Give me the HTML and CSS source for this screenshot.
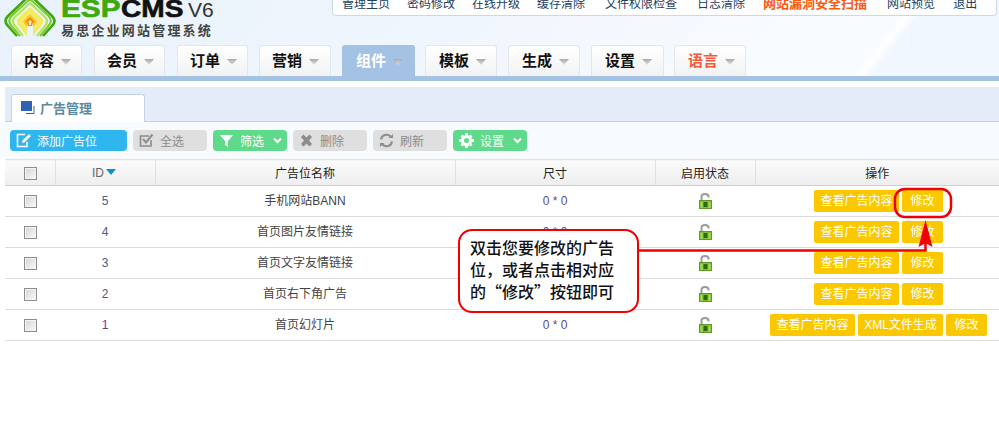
FILE: index.html
```html
<!DOCTYPE html>
<html lang="zh">
<head>
<meta charset="utf-8">
<title>广告管理</title>
<link rel="stylesheet" href="styles.css">
</head>
<body>
<header class="head">
  <div class="head-top">
    <div class="logo">
      <svg class="logo-mark" width="61" height="38" viewBox="0 0 61 38">
        <g fill="none" stroke-linejoin="round">
          <path d="M17 36L8 26Q3 21 8 16L30 -5L52 16Q57 21 52 26L43 36" stroke="#3fa80f" stroke-width="2.6"/>
          <path d="M20 36L11.500 26Q7 21 11.500 16L30 -1L48.500 16Q53 21 48.500 26L40 36" stroke="#7ccc2c" stroke-width="2"/>
          <path d="M23 36L15 26Q11 21 15 17L30 3L45 17Q49 21 45 26L37 36" stroke="#b8e558" stroke-width="2.200"/>
        </g>
        <path d="M27 36L18 25Q15 21 18 18L30 7L42 18Q45 21 42 25L33 36L33 29L37 23Q38 21 36 20L30 14L24 20Q22 21 23 23L27 29Z" fill="#f4ec60"/>
        <path d="M27 28L23.500 23Q22.500 21 24 20L30 14L36 20Q37.500 21 36.500 23L33 28L33 25H27Z" fill="#ffc71c"/>
        <path d="M30 17L34.500 21.500L32 24V26H28V24L25.500 21.500Z" fill="#ee8a1a"/>
        <path d="M30 20L32 22L31 23V25H29V23L28 22Z" fill="#fff2b0"/>
      </svg>
      <div class="logo-text">
        <div class="logo-name"><span class="logo-esp">ESP</span><span class="logo-cms">CMS</span><span class="logo-v">V6</span></div>
        <div class="logo-sub">易思企业网站管理系统</div>
      </div>
    </div>
    <nav class="links">
      <a>管理主页</a><a>密码修改</a><a>在线升级</a><a>缓存清除</a><a>文件权限检查</a><a>日志清除</a><a class="hot">网站漏洞安全扫描</a><a>网站预览</a><a>退出</a>
    </nav>
  </div>
  <nav class="tabs">
    <a class="tab">内容<i class="caret"></i></a>
    <a class="tab">会员<i class="caret"></i></a>
    <a class="tab">订单<i class="caret"></i></a>
    <a class="tab">营销<i class="caret"></i></a>
    <a class="tab active">组件<i class="caret"></i></a>
    <a class="tab">模板<i class="caret"></i></a>
    <a class="tab">生成<i class="caret"></i></a>
    <a class="tab">设置<i class="caret"></i></a>
    <a class="tab lang">语言<i class="caret"></i></a>
  </nav>
</header>

<main class="content">
  <div class="subbar">
    <div class="subtab">
      <svg width="15" height="14" viewBox="0 0 15 14"><rect x="0" y="0" width="11" height="10" fill="#2e63b4"/><path d="M13 5V12.500H5" fill="none" stroke="#2e63b4" stroke-width="1"/></svg>
      <span>广告管理</span>
    </div>
  </div>

  <div class="toolbar">
    <a class="btn blue wide">
      <svg width="15" height="15" viewBox="0 0 15 15"><path d="M9 1.500H1.500V13.500H11V9" fill="none" stroke="#fff" stroke-width="1.600"/><path d="M13 1L15 3L8.500 9.500L6 10L6.500 7.500Z" fill="#fff"/></svg>
      <span>添加广告位</span>
    </a>
    <a class="btn grey">
      <svg width="15" height="15" viewBox="0 0 15 15"><path d="M12 7V13H1.500V3H10" fill="none" stroke="#8c8c8c" stroke-width="1.600"/><path d="M4 6L7 9.500L13.500 1.500" fill="none" stroke="#8c8c8c" stroke-width="2"/></svg>
      <span>全选</span>
    </a>
    <a class="btn green">
      <svg width="15" height="15" viewBox="0 0 15 15"><path d="M1 2H14L9 8V14L6 12V8Z" fill="#fff"/></svg>
      <span>筛选</span>
      <svg class="chev" width="9" height="7" viewBox="0 0 9 7"><path d="M1 1.500L4.500 5L8 1.500" fill="none" stroke="#fff" stroke-width="2"/></svg>
    </a>
    <a class="btn grey">
      <svg width="15" height="15" viewBox="0 0 15 15"><path d="M2 4L4.500 1.500L7.500 4.500L10.500 1.500L13 4L10 7.500L13 11L10.500 13.500L7.500 10.500L4.500 13.500L2 11L5 7.500Z" fill="#8c8c8c"/></svg>
      <span>删除</span>
    </a>
    <a class="btn grey">
      <svg width="15" height="15" viewBox="0 0 15 15"><path d="M2 6.500A5.500 5.500 0 0 1 11.500 3.500M13 8.500A5.500 5.500 0 0 1 3.500 11.500" fill="none" stroke="#8c8c8c" stroke-width="2"/><path d="M9.500 5H14V1ZM5.500 10H1V14Z" fill="#8c8c8c"/></svg>
      <span>刷新</span>
    </a>
    <a class="btn green">
      <svg width="15" height="15" viewBox="0 0 15 15"><circle cx="7.500" cy="7.500" r="4" fill="none" stroke="#fff" stroke-width="3"/><path d="M6 0H9V3H6ZM6 12H9V15H6ZM0 6H3V9H0ZM12 6H15V9H12ZM1.500 3.500L3.500 1.500L5.500 3.500L3.500 5.500ZM9.500 11.500L11.500 9.500L13.500 11.500L11.500 13.500ZM9.500 3.500L11.500 1.500L13.500 3.500L11.500 5.500ZM1.500 11.500L3.500 9.500L5.500 11.500L3.500 13.500Z" fill="#fff"/></svg>
      <span>设置</span>
      <svg class="chev" width="9" height="7" viewBox="0 0 9 7"><path d="M1 1.500L4.500 5L8 1.500" fill="none" stroke="#fff" stroke-width="2"/></svg>
    </a>
  </div>

  <table class="grid">
    <colgroup>
      <col class="c-check"><col class="c-id"><col class="c-name"><col class="c-size"><col class="c-state"><col class="c-op">
    </colgroup>
    <thead>
      <tr>
        <th class="cell-check"><i class="check"></i></th>
        <th class="th-id">ID<i class="sort"></i></th>
        <th>广告位名称</th>
        <th>尺寸</th>
        <th>启用状态</th>
        <th class="th-last">操作</th>
      </tr>
    </thead>
    <tbody>
      <tr>
        <td class="cell-check"><i class="check"></i></td><td class="id">5</td><td>手机网站BANN</td><td class="size">0 * 0</td>
        <td><svg class="lock" width="13" height="16" viewBox="0 0 13 16"><use href="#lock"/></svg></td>
        <td class="ops"><a class="op">查看广告内容</a><a class="op">修改</a></td>
      </tr>
      <tr>
        <td class="cell-check"><i class="check"></i></td><td class="id">4</td><td>首页图片友情链接</td><td class="size">0 * 0</td>
        <td><svg class="lock" width="13" height="16" viewBox="0 0 13 16"><use href="#lock"/></svg></td>
        <td class="ops"><a class="op">查看广告内容</a><a class="op">修改</a></td>
      </tr>
      <tr>
        <td class="cell-check"><i class="check"></i></td><td class="id">3</td><td>首页文字友情链接</td><td class="size">0 * 0</td>
        <td><svg class="lock" width="13" height="16" viewBox="0 0 13 16"><use href="#lock"/></svg></td>
        <td class="ops"><a class="op">查看广告内容</a><a class="op">修改</a></td>
      </tr>
      <tr>
        <td class="cell-check"><i class="check"></i></td><td class="id">2</td><td>首页右下角广告</td><td class="size">0 * 0</td>
        <td><svg class="lock" width="13" height="16" viewBox="0 0 13 16"><use href="#lock"/></svg></td>
        <td class="ops"><a class="op">查看广告内容</a><a class="op">修改</a></td>
      </tr>
      <tr>
        <td class="cell-check"><i class="check"></i></td><td class="id id1">1</td><td>首页幻灯片</td><td class="size">0 * 0</td>
        <td><svg class="lock" width="13" height="16" viewBox="0 0 13 16"><use href="#lock"/></svg></td>
        <td class="ops"><a class="op">查看广告内容</a><a class="op op-xml">XML文件生成</a><a class="op">修改</a></td>
      </tr>
    </tbody>
  </table>
</main>

<svg class="defs" width="0" height="0">
  <symbol id="lock" viewBox="0 0 13 16">
    <path d="M2.500 8V3.500Q2.500 1 6 1Q9.500 1 9.500 3.500V4.500" fill="none" stroke="#9a9a9a" stroke-width="2"/>
    <rect x="0.500" y="7.500" width="12" height="8" fill="#7cc22e" stroke="#5f9a25"/>
    <rect x="4.500" y="9" width="4" height="5" fill="#2f6a10"/>
    <path d="M1.500 10H3.500M1.500 12H3.500M1.500 14H3.500M9.500 10H11.500M9.500 12H11.500M9.500 14H11.500" stroke="#c8ee8a"/>
  </symbol>
</svg>

<svg class="marks" width="999" height="437" viewBox="0 0 999 437">
  <rect x="895" y="189" width="56" height="28" rx="10" fill="none" stroke="#f00000" stroke-width="2.500"/>
  <path d="M638 250.500H925.500V240" fill="none" stroke="#f00000" stroke-width="2.500"/>
  <path d="M925.500 220L932.500 247L925.500 243L918.500 247Z" fill="#f00000"/>
</svg>
<div class="callout">双击您要修改的广告位，或者点击相对应的“修改”按钮即可</div>
</body>
</html>
```
FILE: styles.css
```css
* { box-sizing: border-box; }
html, body { margin: 0; padding: 0; }
body {
  width: 999px;
  height: 437px;
  overflow: hidden;
  position: relative;
  background: #fff;
  font-family: "Liberation Sans", "Noto Sans CJK SC", sans-serif;
  font-size: 12px;
  color: #333;
}
a { text-decoration: none; color: inherit; }
i { font-style: normal; }

.head {
  height: 81px;
  background-color: #edf4fd;
  background-image: linear-gradient(128deg, #e9f2fc 0, #f0f6fd 45%, #f6faff 68%, #f9fcff 86%, #fdfeff 87%, #f1f7fe 88%);
  background-size: 100% 76px;
  background-repeat: no-repeat;
  border-bottom: 5px solid #a3c2e4;
}
.head-top { display: flex; justify-content: space-between; height: 45px; }

.logo { display: flex; height: 38px; overflow: hidden; }
.logo-mark { flex: none; }
.logo-text { margin-top: -3px; }
.logo-name { display: flex; align-items: baseline; height: 24px; line-height: 24px; white-space: nowrap; }
.logo-esp, .logo-cms {
  display: inline-block;
  font-size: 24px;
  font-weight: 700;
  -webkit-text-stroke: .6px currentColor;
  transform-origin: left center;
}
.logo-esp { width: 60px; color: #3fa90c; transform: scaleX(1.24); }
.logo-cms { width: 63px; color: #111; transform: scaleX(1.17); }
.logo-v { color: #333; font-size: 21px; margin-left: 4px; }
.logo-sub {
  margin-top: 3px;
  font-size: 13px;
  line-height: 14px;
  font-weight: 700;
  letter-spacing: 2.200px;
  color: #444;
  white-space: nowrap;
}

.links {
  display: flex;
  gap: 17px;
  align-self: flex-start;
  width: 665px;
  height: 16px;
  margin-right: 2px;
  padding-left: 9px;
  background: #fff;
  border: 1px solid #c9d8ea;
  border-top: 0;
  border-radius: 0 0 4px 4px;
  overflow: hidden;
  line-height: 8px;
  color: #23405f;
  white-space: nowrap;
}
.links a { flex: none; }
.links a:nth-child(5), .links a:nth-child(6), .links a:nth-child(8) { margin-left: 3px; }
.links a:nth-child(7), .links a:nth-child(9) { margin-left: 1px; }
.links .hot { color: #fa5a14; font-weight: 700; font-size: 13px; }

.tabs { display: flex; gap: 12px; padding-left: 11px; height: 31px; }
.tab {
  width: 71px;
  height: 31px;
  display: flex;
  align-items: center;
  gap: 7px;
  padding: 0 0 3px 12px;
  background: linear-gradient(#fff, #f1f2f3);
  border: 1px solid #e3e6ea;
  border-bottom: 0;
  border-radius: 3px 3px 0 0;
  font-size: 15px;
  font-weight: 700;
  color: #111;
}
.tab:nth-child(4) { margin-left: -1px; width: 72px; }
.tab:nth-child(5) { margin-left: -1px; width: 73px; padding-left: 13px; }
.tab:nth-child(6) { margin-left: -2px; width: 72px; padding-left: 13px; }
.tab:nth-child(7) { margin-left: -1px; width: 72px; padding-left: 13px; }
.tab:nth-child(8) { margin-left: -1px; width: 73px; padding-left: 13px; }
.tab:nth-child(9) { margin-left: -2px; width: 72px; padding-left: 13px; }
.tab.active { background: #a3c2e4; border-color: #a3c2e4; color: #fff; }
.tab.lang { color: #f5593a; }
.caret {
  width: 10px;
  height: 6px;
  margin-top: 5px;
  background: linear-gradient(#a8a8a8, #e2e2e2);
  clip-path: polygon(0 0, 100% 0, 50% 100%);
}

.content { background: #fff; padding: 6px 0 0 5px; }
.subbar {
  height: 35px;
  padding: 7px 0 0 6px;
  background: #e3ecf8;
  border-bottom: 1px solid #c9cfd3;
}
.subtab {
  width: 134px;
  height: 28px;
  display: flex;
  align-items: center;
  gap: 4px;
  padding: 0 0 2px 9px;
  background: #fff;
  border: 1px solid #c6d2dc;
  border-bottom: 0;
  border-radius: 3px 3px 0 0;
  font-size: 13px;
  font-weight: 700;
  color: #5b8ba3;
}

.toolbar {
  display: flex;
  gap: 6px;
  height: 37px;
  padding-top: 8px;
  margin-left: -5px;
  padding-left: 10px;
  background: #f7fbfe;
}
.btn {
  height: 21px;
  display: flex;
  align-items: center;
  gap: 6px;
  padding-left: 6px;
  width: 74px;
  border-radius: 4px;
  font-size: 12px;
}
.btn.wide { width: 117px; }
.btn.blue { background: #30b6ee; color: #fff; }
.btn.grey { background: #dfdfdf; color: #8c8c8c; }
.btn.green { background: #5fd98a; color: #fff; }
.chev { margin-left: 3px; }

.grid {
  width: 994px;
  border-collapse: collapse;
  table-layout: fixed;
}
.c-check { width: 50px; }
.c-id { width: 100px; }
.c-name { width: 300px; }
.c-size { width: 200px; }
.c-state { width: 100px; }
.c-op { width: 244px; }
.grid th {
  height: 26px;
  padding: 0;
  font-weight: 400;
  color: #222;
  text-align: center;
  background: linear-gradient(#fbfbfb, #eeeeee);
  border-top: 1px solid #dfe3e6;
  border-bottom: 1px solid #cfcfcf;
  border-right: 1px solid #e0e0e0;
}
.grid th.th-last { border-right: 0; }
.grid th.th-id { color: #666; padding-right: 2px; }
.grid td {
  height: 31px;
  padding: 0 0 1px;
  line-height: 14px;
  text-align: center;
  border-bottom: 1px solid #dcdcdc;
  color: #444;
}
.grid td.id { color: #4a5a8c; }
.grid td.id1 { color: #6b3a8c; }
.grid td.size { color: #5a4a90; }
.grid .cell-check { padding-left: 1px; }
.check {
  display: inline-block;
  width: 13px;
  height: 13px;
  vertical-align: middle;
  border: 1px solid #8d8d8d;
  background: linear-gradient(135deg, #d4d4d4, #fafafa);
  box-shadow: inset 0 0 0 1px #f4f4f4;
}
.sort {
  display: inline-block;
  width: 0;
  height: 0;
  margin-left: 2px;
  vertical-align: 2px;
  border-left: 5px solid transparent;
  border-right: 5px solid transparent;
  border-top: 6px solid #0e8fd0;
}
.lock { display: block; margin: 0 auto; }
.grid td.ops {
  padding: 0 0 1px 3px;
  white-space: nowrap;
  font-size: 0;
}
.op {
  display: inline-block;
  width: 41px;
  height: 22px;
  line-height: 22px;
  text-align: center;
  background: #fbc800;
  color: #fff;
  border-radius: 2px;
  font-size: 12px;
  vertical-align: middle;
}
.op:first-child, .op.op-xml { width: 85px; }
.op + .op { margin-left: 3px; }

.defs { position: absolute; }
.marks { position: absolute; left: 0; top: 0; pointer-events: none; }
.callout {
  position: absolute;
  left: 458px;
  top: 229px;
  width: 181px;
  height: 84px;
  padding: 5px 18px 0 10px;
  background: #fff;
  border: 2.500px solid #f00000;
  border-radius: 14px;
  font-family: "Noto Sans CJK SC", "Liberation Sans", sans-serif;
  font-size: 16px;
  line-height: 22px;
  font-weight: 500;
  color: #111;
}
```
